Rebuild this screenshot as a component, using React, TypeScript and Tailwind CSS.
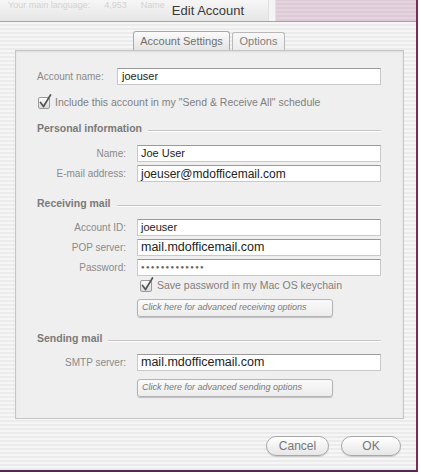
import React from "react";

const font = { fontFamily: '"Liberation Sans", Arial, sans-serif' };

function Check() {
  return (
    <svg width="15" height="16" viewBox="0 0 15 16" className="shrink-0">
      <defs>
        <linearGradient id="cb" x1="0" y1="0" x2="0" y2="1">
          <stop offset="0" stopColor="#ffffff" />
          <stop offset="1" stopColor="#d8d8d8" />
        </linearGradient>
      </defs>
      <rect x="0.5" y="3.5" width="11" height="11" rx="1.5" fill="url(#cb)" stroke="#9a9a9a" />
      <path d="M2.5 8.5 L5.5 12.5 L12.5 1" fill="none" stroke="#555" strokeWidth="1.7" strokeLinecap="round" strokeLinejoin="round" />
    </svg>
  );
}

function Field({ value, size = "text-[11px]" }: { value: string; size?: string }) {
  return (
    <div
      className={`h-[17px] w-[244px] bg-white border border-[#c9c9c9] border-t-[#9a9a9a] flex items-center pl-[3px] text-[#222] ${size}`}
    >
      {value}
    </div>
  );
}

function Row({ label, value, size, mt }: { label: string; value: string; size?: string; mt: string }) {
  return (
    <div className={`flex items-center ${mt}`}>
      <div className="w-[110px] text-right text-[10px] text-[#8a8a8a]">{label}</div>
      <div className="ml-[11px]">
        <Field value={value} size={size} />
      </div>
    </div>
  );
}

function Heading({ text, mt }: { text: string; mt: string }) {
  return (
    <div className={`flex items-center h-[14px] pl-[21px] pr-[22px] ${mt}`}>
      <span className="text-[10.5px] font-bold text-[#7a7a7a]">{text}</span>
      <div className="flex-1 ml-[6px] mt-[4px] border-t border-[#c4c4c4] border-b border-b-white" />
    </div>
  );
}

function AdvButton({ text, mt }: { text: string; mt: string }) {
  return (
    <div
      className={`ml-[121px] w-[196px] h-[18px] ${mt} rounded-[3px] border border-[#b4b4b4] bg-[linear-gradient(#fafafa,#ececec)] shadow-[0_1px_1px_rgba(0,0,0,0.2)] flex items-center pl-[4px] text-[9px] italic text-[#7a7a7a]`}
    >
      {text}
    </div>
  );
}

export default function App() {
  return (
    <div className="w-[421px] h-[475px] bg-white overflow-hidden" style={font}>
      <div className="w-[418px] h-[472px] border-r-2 border-b-2 border-r-[#7a2d55] border-b-[#4e2a50] flex flex-col">
        {/* title bar */}
        <div className="h-[22px] flex border-b border-[#a4a4a4] bg-[linear-gradient(#f6f6f6,#e6e6e6)] relative">
          <div className="w-[268px] relative overflow-hidden">
            <div className="absolute top-0 left-[8px] flex gap-[14px] text-[9px] leading-[10px] text-[#d2d2d2] whitespace-nowrap">
              <span>Your main language:</span>
              <span>4,953</span>
              <span>Name</span>
            </div>
          </div>
          <div className="w-[8px] border-l border-r border-[#e0e0e0] bg-[#f4f4f4]" />
          <div className="flex-1 bg-[repeating-linear-gradient(0deg,#dccad6_0px,#dccad6_2px,#e4d4de_2px,#e4d4de_4px)]" />
          <div className="absolute inset-0 flex justify-center items-start pt-[3px] pointer-events-none">
            <span className="text-[13px] text-[#3a3a3a] leading-[15px]">Edit Account</span>
          </div>
        </div>

        {/* body */}
        <div className="flex-1 bg-[repeating-linear-gradient(0deg,#ebebeb_0px,#ebebeb_2px,#f6f6f6_2px,#f6f6f6_4px)] pt-[9px]">
          {/* tabs */}
          <div className="flex h-[19px] ml-[133px] gap-[2px] items-end">
            <div className="h-[19px] w-[97px] rounded-t-[3px] border border-b-0 border-[#a8a8a8] bg-[linear-gradient(#fbfbfb,#e4e4e4)] flex items-center justify-center text-[11px] text-[#6e6e6e]">
              Account Settings
            </div>
            <div className="h-[18px] w-[53px] rounded-t-[3px] border border-b-0 border-[#b8b8b8] bg-[linear-gradient(#f8f8f8,#ececec)] flex items-center justify-center text-[11px] text-[#808080]">
              Options
            </div>
          </div>

          {/* panel */}
          <div className="ml-[15px] w-[389px] h-[369px] bg-[#efefef] border border-[#c4c4c4] shadow-[inset_0_1px_2px_rgba(0,0,0,0.08)] flex flex-col pt-[17px]">
            <div className="flex items-center pl-[21px]">
              <div className="w-[80px] text-[10px] text-[#8a8a8a]">Account name:</div>
              <div className="h-[17px] w-[264px] bg-white border border-[#c9c9c9] border-t-[#9a9a9a] flex items-center pl-[4px] text-[11px] text-[#222]">
                joeuser
              </div>
            </div>

            <div className="flex items-center gap-[2px] pl-[22px] mt-[9px] h-[16px]">
              <Check />
              <span className="text-[10.5px] text-[#808080] mt-[2px]">
                Include this account in my "Send &amp; Receive All" schedule
              </span>
            </div>

            <Heading text="Personal information" mt="mt-[12px]" />
            <Row label="Name:" value="Joe User" mt="mt-[9px]" />
            <Row label="E-mail address:" value="joeuser@mdofficemail.com" size="text-[12px]" mt="mt-[3px]" />

            <Heading text="Receiving mail" mt="mt-[15px]" />
            <Row label="Account ID:" value="joeuser" mt="mt-[8px]" />
            <Row label="POP server:" value="mail.mdofficemail.com" size="text-[12.5px]" mt="mt-[3px]" />
            <Row label="Password:" value="●●●●●●●●●●●●●" size="text-[6px] tracking-[1.3px] text-[#666]" mt="mt-[3px]" />

            <div className="flex items-center gap-[2px] ml-[124px] mt-[1px] h-[16px]">
              <Check />
              <span className="text-[10.5px] text-[#808080] mt-[2px]">Save password in my Mac OS keychain</span>
            </div>
            <AdvButton text="Click here for advanced receiving options" mt="mt-[6px]" />

            <Heading text="Sending mail" mt="mt-[15px]" />
            <Row label="SMTP server:" value="mail.mdofficemail.com" size="text-[12.5px]" mt="mt-[8px]" />
            <AdvButton text="Click here for advanced sending options" mt="mt-[8px]" />
          </div>

          {/* buttons */}
          <div className="flex justify-end gap-[12px] pr-[15px] mt-[17px]">
            <div className="h-[20px] w-[63px] rounded-full border border-[#a8a8a8] bg-[linear-gradient(#ffffff,#e6e6e6)] shadow-[0_1px_1px_rgba(0,0,0,0.15)] flex items-center justify-center text-[12px] text-[#767676]">
              Cancel
            </div>
            <div className="h-[20px] w-[60px] rounded-full border border-[#a8a8a8] bg-[linear-gradient(#ffffff,#e6e6e6)] shadow-[0_1px_1px_rgba(0,0,0,0.15)] flex items-center justify-center text-[12px] text-[#767676]">
              OK
            </div>
          </div>
        </div>
      </div>
    </div>
  );
}
